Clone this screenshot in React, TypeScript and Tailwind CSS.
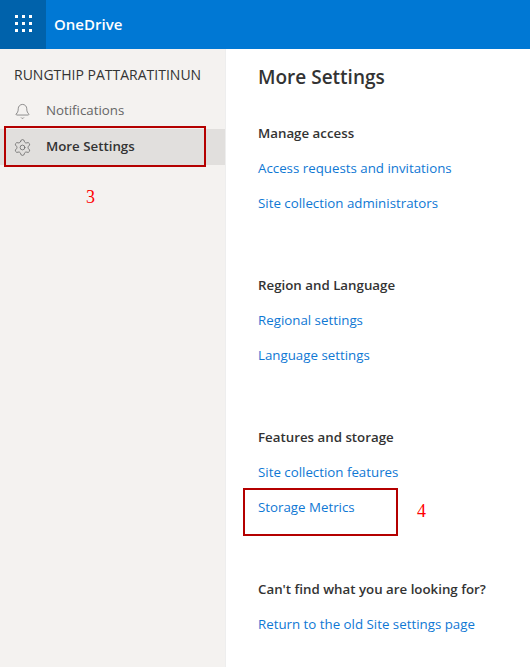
import { Bell, Settings } from "lucide-react";

const font = { fontFamily: '"Open Sans", "Noto Sans", sans-serif' };

function Section({ title, links, className }: { title: string; links: string[]; className: string }) {
  return (
    <section className={className}>
      <h2 className="text-[13.3px] leading-[20px] font-semibold text-[#333333]">{title}</h2>
      <div className="mt-[15px] flex flex-col gap-[15px]">
        {links.map((l) => (
          <a key={l} className="text-[13.3px] leading-[20px] text-[#0f78d4]">{l}</a>
        ))}
      </div>
    </section>
  );
}

export default function App() {
  return (
    <div className="relative w-[530px] h-[667px] overflow-hidden bg-white flex flex-col" style={font}>
      <header className="h-[49px] shrink-0 bg-[#0078d4] flex items-center">
        <div className="w-[46px] h-full bg-[#0062ab] grid place-items-center">
          <div className="grid grid-cols-3 gap-[4px] -mt-[2px]">
            {Array.from({ length: 9 }).map((_, i) => (
              <span key={i} className="w-[3px] h-[3px] bg-white" />
            ))}
          </div>
        </div>
        <span className="ml-[8px] -mt-[1px] text-[15px] font-semibold text-white">OneDrive</span>
      </header>
      <div className="flex flex-1 min-h-0">
        <aside className="w-[226px] shrink-0 bg-[#f4f2f0] border-r border-[#eeeeee] pt-[16px]">
          <div className="pl-[14px] text-[14px] leading-[20px] text-[#333333] whitespace-nowrap">RUNGTHIP PATTARATITINUN</div>
          <nav className="mt-[8px] flex flex-col">
            <div className="h-[36px] flex items-center pl-[14px] text-[#666666]">
              <Bell size={17} strokeWidth={1} />
              <span className="ml-[15px] text-[13.3px]">Notifications</span>
            </div>
            <div className="h-[36px] flex items-center pl-[13px] bg-[#e1dfdd] text-[#333333]">
              <Settings size={19} strokeWidth={1} className="text-[#666666]" />
              <span className="ml-[14px] text-[13.3px] font-semibold">More Settings</span>
            </div>
          </nav>
        </aside>
        <main className="flex-1 pl-[32px] pt-[14px]">
          <h1 className="text-[19px] leading-[28px] font-semibold text-[#333333]">More Settings</h1>
          <Section className="mt-[32px]" title="Manage access" links={["Access requests and invitations", "Site collection administrators"]} />
          <Section className="mt-[62px]" title="Region and Language" links={["Regional settings", "Language settings"]} />
          <Section className="mt-[62px]" title="Features and storage" links={["Site collection features", "Storage Metrics"]} />
          <Section className="mt-[62px]" title="Can't find what you are looking for?" links={["Return to the old Site settings page"]} />
        </main>
      </div>
      <div className="absolute left-[4px] top-[126px] w-[202px] h-[41px] border-2 border-[#b40000]" />
      <div className="absolute left-[243px] top-[488px] w-[155px] h-[48px] border-2 border-[#b40000]" />
      <span className="absolute left-[86px] top-[185px] text-[18px] leading-[24px] text-[#ff0000]" style={{ fontFamily: '"Liberation Serif", serif' }}>3</span>
      <span className="absolute left-[417px] top-[499px] text-[18px] leading-[24px] text-[#ff0000]" style={{ fontFamily: '"Liberation Serif", serif' }}>4</span>
    </div>
  );
}
